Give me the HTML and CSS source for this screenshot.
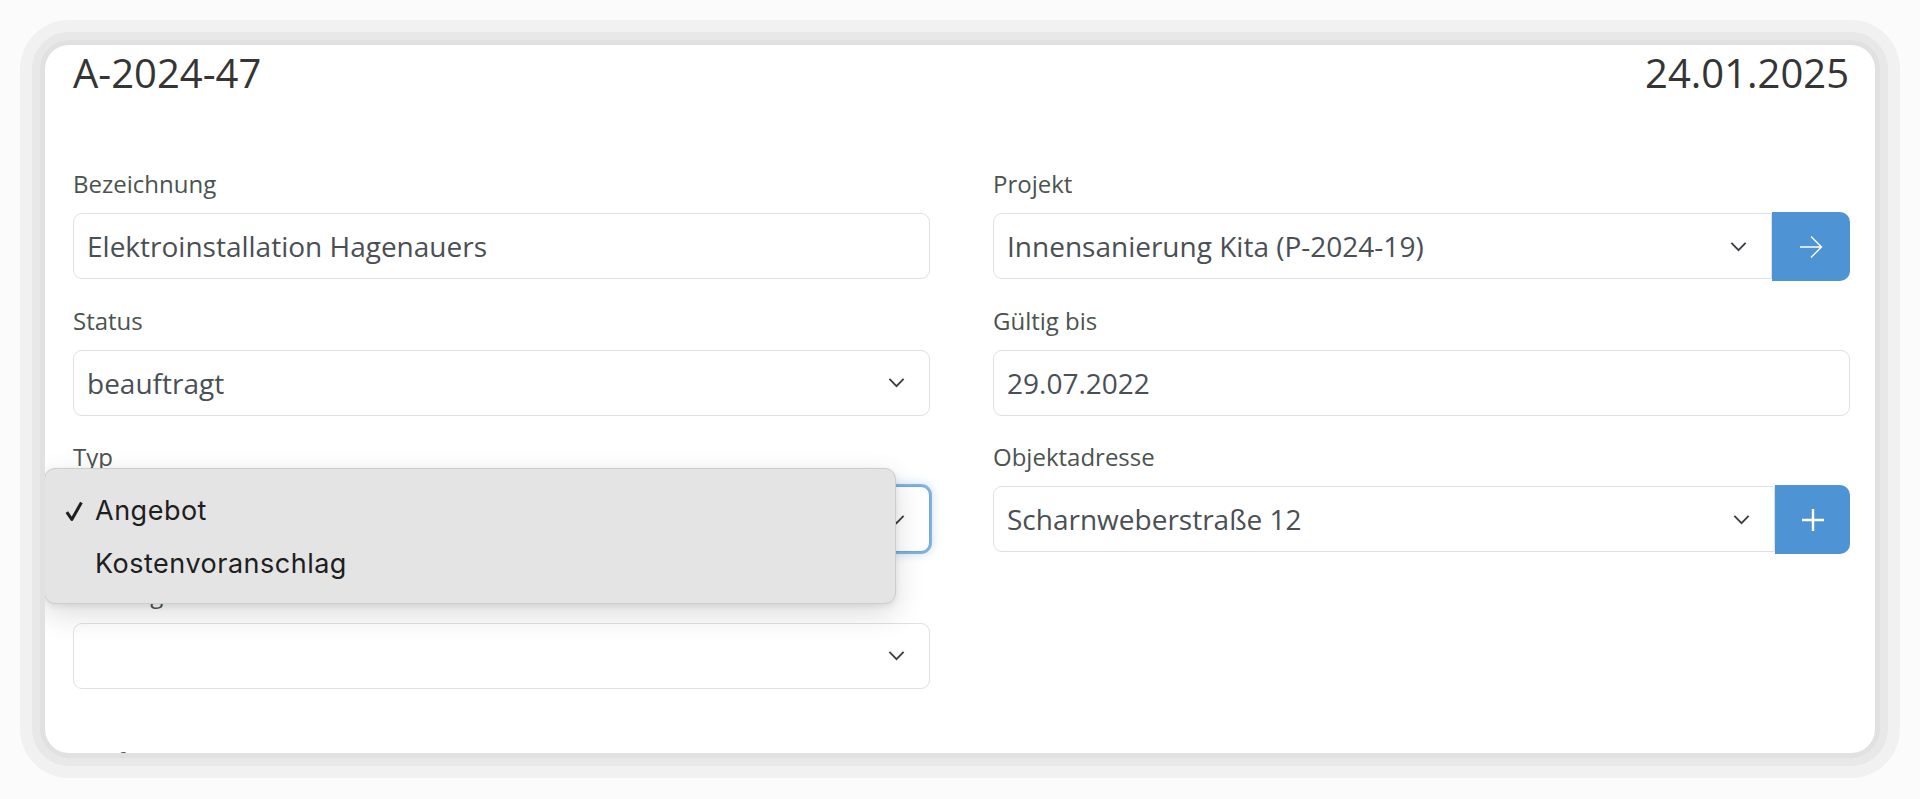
FILE: index.html
```html
<!DOCTYPE html>
<html lang="de">
<head>
    <meta charset="UTF-8">
    <meta name="viewport" content="width=device-width, initial-scale=1.0">
    <title>Angebot A-2024-47</title>
    <link rel="stylesheet" href="styles.css">
</head>
<body>
    <div class="card">
        <div class="card-head">
            <h2 class="doc-no">A-2024-47</h2>
            <span class="doc-date">24.01.2025</span>
        </div>

        <div class="form-grid">
            <div class="group">
                <label>Bezeichnung</label>
                <div class="field">Elektroinstallation Hagenauers</div>
            </div>
            <div class="group">
                <label>Projekt</label>
                <div class="input-group">
                    <div class="field select">
                        <span>Innensanierung Kita (P-2024-19)</span>
                        <svg class="chev" viewBox="0 0 16 16"><path d="M2 5l6 6 6-6"/></svg>
                    </div>
                    <button class="btn-blue btn-arrow">
                        <svg viewBox="0 0 24 24"><path d="M1 12h21M12 1.5l10.5 10.5L12 22.5"/></svg>
                    </button>
                </div>
            </div>

            <div class="group">
                <label>Status</label>
                <div class="field select">
                    <span>beauftragt</span>
                    <svg class="chev" viewBox="0 0 16 16"><path d="M2 5l6 6 6-6"/></svg>
                </div>
            </div>
            <div class="group">
                <label>Gültig bis</label>
                <div class="field">29.07.2022</div>
            </div>

            <div class="group has-menu">
                <label>Typ</label>
                <div class="field select focused">
                    <span>Angebot</span>
                    <svg class="chev" viewBox="0 0 16 16"><path d="M2 5l6 6 6-6"/></svg>
                </div>
                <!-- offenes Auswahlmenü -->
                <ul class="menu">
                    <li class="checked">
                        <svg class="check" viewBox="0 0 18 20"><path d="M1.8 11.2l5 7.2L16.4 1.6"/></svg>
                        Angebot
                    </li>
                    <li>Kostenvoranschlag</li>
                </ul>
            </div>
            <div class="group">
                <label>Objektadresse</label>
                <div class="input-group">
                    <div class="field select">
                        <span>Scharnweberstraße 12</span>
                        <svg class="chev" viewBox="0 0 16 16"><path d="M2 5l6 6 6-6"/></svg>
                    </div>
                    <button class="btn-blue btn-plus">
                        <svg viewBox="0 0 22 22"><path d="M11 0v22M0 11h22"/></svg>
                    </button>
                </div>
            </div>

            <div class="group">
                <label>Zahlungsziel</label>
                <div class="field select">
                    <span></span>
                    <svg class="chev" viewBox="0 0 16 16"><path d="M2 5l6 6 6-6"/></svg>
                </div>
            </div>
        </div>

        <div class="group section">
            <label>Kopftext</label>
            <div class="field area"></div>
        </div>
    </div>
</body>
</html>
```

FILE: styles.css
```css
html {
    background: #fbfbfb;
}
body {
    margin: 0;
    min-height: 799px;
    box-sizing: border-box;
    padding: 45px 45px 0 45px;
    background: #fbfbfb;
    font-family: "Open Sans", "Liberation Sans", sans-serif;
}
.card {
    background: #fff;
    height: 708px;
    overflow: hidden;
    border-radius: 24px;
    padding: 4px 25px 0 28px;
    box-sizing: border-box;
    box-shadow: 0 0 0 5px #e1e1e1, 0 0 0 13px #e8e8e8, 0 0 0 25px #f1f1f1;
}
.card-head {
    display: flex;
    justify-content: space-between;
    height: 48px;
    margin-bottom: 69px;
    font-size: 40px;
    line-height: 48px;
    color: #353535;
}
.doc-no {
    margin: 0;
    font-size: 40px;
    font-weight: 400;
}
.doc-date {
    padding-right: 1px;
}
.form-grid {
    display: grid;
    grid-template-columns: 1fr 1fr;
    column-gap: 63px;
}
.group {
    position: relative;
    margin-bottom: 23.5px;
}
.group label {
    display: block;
    font-size: 24px;
    line-height: 36px;
    margin-bottom: 11px;
    color: #4b534f;
}
.field {
    height: 66px;
    box-sizing: border-box;
    border: 1px solid #dde1e5;
    border-radius: 9px;
    padding: 0 13px;
    display: flex;
    align-items: center;
    font-size: 28px;
    color: #4a4f55;
    background: #fff;
}
.select {
    justify-content: space-between;
}
.chev {
    width: 19px;
    height: 19px;
    margin-right: 10px;
    fill: none;
    stroke: #3b3f44;
    stroke-width: 1.6;
}
.focused {
    border-color: #6ea8e0;
    box-shadow: 0 0 0 2px rgba(78, 147, 211, 0.65), 0 0 8px 3px rgba(78, 147, 211, 0.25);
}
.input-group {
    display: flex;
    height: 66px;
}
.input-group .field {
    flex: 1;
    border-radius: 9px 0 0 9px;
}
.btn-blue {
    border: none;
    margin: -1px 0 -2px 0;
    padding: 0;
    background: #4e93d3;
    border-radius: 0 10px 10px 0;
    display: flex;
    align-items: center;
    justify-content: center;
}
.btn-blue svg {
    fill: none;
    stroke: #fff;
}
.btn-arrow {
    width: 78px;
}
.btn-arrow svg {
    width: 24px;
    height: 24px;
    stroke-width: 1.4;
}
.btn-plus {
    width: 75px;
}
.btn-plus svg {
    width: 22px;
    height: 22px;
    stroke-width: 2.4;
}
.menu {
    position: absolute;
    top: 29px;
    left: -29px;
    width: 852px;
    height: 136px;
    box-sizing: border-box;
    margin: 0;
    padding: 15px 0 13px 0;
    list-style: none;
    background: #e4e4e4;
    border: 1px solid #cdcdcd;
    border-radius: 11px;
    box-shadow: 0 10px 30px rgba(0, 0, 0, 0.14), 0 2px 6px rgba(0, 0, 0, 0.08);
    font-family: Inter, "Noto Sans", sans-serif;
    font-size: 27px;
    letter-spacing: 0.5px;
    color: #1e1e1e;
    z-index: 5;
}
.menu li {
    position: relative;
    height: 53px;
    line-height: 53px;
    padding-left: 50px;
}
.check {
    position: absolute;
    left: 20px;
    top: 17px;
    width: 18px;
    height: 20px;
    fill: none;
    stroke: #1e1e1e;
    stroke-width: 3;
    stroke-linejoin: round;
}
.section {
    margin-top: 30.5px;
}
.area {
    height: 120px;
}
```
